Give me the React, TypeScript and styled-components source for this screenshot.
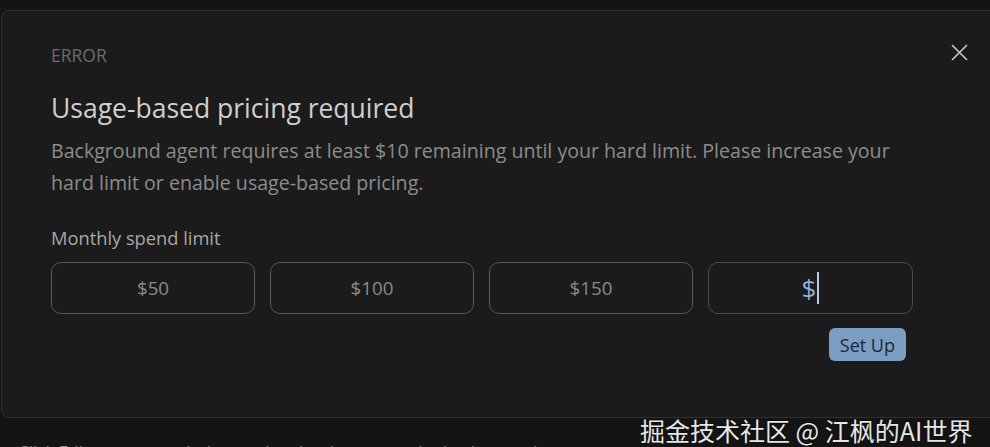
import styled, { createGlobalStyle } from 'styled-components';

const GlobalStyle = createGlobalStyle`
  html, body {
    margin: 0;
    padding: 0;
    background: #141414;
    overflow: hidden;
  }
  * {
    box-sizing: border-box;
  }
`;

const presets = ['$50', '$100', '$150'];

export default function App() {
  return (
    <Page>
      <GlobalStyle />
      <Dialog>
        <CloseButton aria-label="Close">
          <svg width="17" height="17" viewBox="0 0 17 17">
            <path d="M1.5 1.5 L15.5 15.5 M15.5 1.5 L1.5 15.5" stroke="#c4c4c4" strokeWidth="1.7" strokeLinecap="round" />
          </svg>
        </CloseButton>
        <Eyebrow>ERROR</Eyebrow>
        <Title>Usage-based pricing required</Title>
        <Message>
          Background agent requires at least $10 remaining until your hard limit. Please increase your
          hard limit or enable usage-based pricing.
        </Message>
        <FieldLabel>Monthly spend limit</FieldLabel>
        <OptionRow>
          {presets.map(p => (
            <OptionButton key={p}>{p}</OptionButton>
          ))}
          <AmountField>
            $<Caret />
          </AmountField>
        </OptionRow>
        <Actions>
          <SetUpButton>Set Up</SetUpButton>
        </Actions>
      </Dialog>
      <Footer>Click Edit to open a window and make changes to the background agent</Footer>
      <Watermark>掘金技术社区 @ 江枫的AI世界</Watermark>
    </Page>
  );
}

const Page = styled.div`
  position: relative;
  width: 990px;
  height: 447px;
  padding-top: 10px;
  padding-left: 1px;
  overflow: hidden;
  font-family: 'Open Sans', 'Noto Sans', sans-serif;
`;

const Dialog = styled.div`
  position: relative;
  width: 1010px;
  height: 408px;
  padding: 33px 0 0 49px;
  background: #1b1b1b;
  border: 1px solid #2f2f2f;
  border-radius: 8px;
`;

const CloseButton = styled.button`
  position: absolute;
  top: 33px;
  right: 42px;
  display: flex;
  padding: 0;
  background: none;
  border: none;
  cursor: pointer;
`;

const Eyebrow = styled.div`
  font-size: 17.5px;
  line-height: 22px;
  color: #6c6c6c;
`;

const Title = styled.h2`
  margin: 25px 0 0;
  font-size: 26.5px;
  font-weight: 400;
  line-height: 34px;
  color: #cfcfcf;
`;

const Message = styled.p`
  width: 862px;
  margin: 10px 0 0;
  font-size: 19.6px;
  line-height: 32px;
  color: #8c8c8c;
`;

const FieldLabel = styled.div`
  margin-top: 27px;
  font-size: 18.3px;
  line-height: 24px;
  color: #a8a8a8;
`;

const OptionRow = styled.div`
  display: flex;
  gap: 15px;
  margin-top: 12px;
`;

const OptionButton = styled.button`
  width: 204px;
  height: 52px;
  background: transparent;
  border: 1px solid #585858;
  border-radius: 10px;
  font-family: inherit;
  font-size: 18.8px;
  color: #8a8a8a;
  cursor: pointer;
`;

const AmountField = styled.div`
  display: flex;
  align-items: center;
  justify-content: center;
  width: 205px;
  height: 52px;
  border: 1px solid #4c4c4c;
  border-radius: 10px;
  font-size: 26px;
  color: #8fb2d8;
`;

const Caret = styled.span`
  display: inline-block;
  width: 2px;
  height: 32px;
  margin-left: 1px;
  background: #b9cde4;
`;

const Actions = styled.div`
  display: flex;
  justify-content: flex-end;
  width: 855px;
  margin-top: 14px;
`;

const SetUpButton = styled.button`
  height: 33px;
  padding: 0 11px;
  background: #7b9dc1;
  border: none;
  border-radius: 6px;
  font-family: inherit;
  font-size: 18px;
  color: #1d2836;
  cursor: pointer;
`;

const Footer = styled.div`
  margin-top: 22px;
  padding-left: 17px;
  font-size: 17px;
  line-height: 24px;
  color: #8a8a8a;
`;

const Watermark = styled.div`
  position: absolute;
  left: 640px;
  top: 412px;
  font-family: 'Noto Sans CJK SC', sans-serif;
  font-size: 25px;
  line-height: 36px;
  color: #e6e6e6;
  white-space: nowrap;
  text-shadow: 0 0 2px rgba(0, 0, 0, 0.6);
`;
